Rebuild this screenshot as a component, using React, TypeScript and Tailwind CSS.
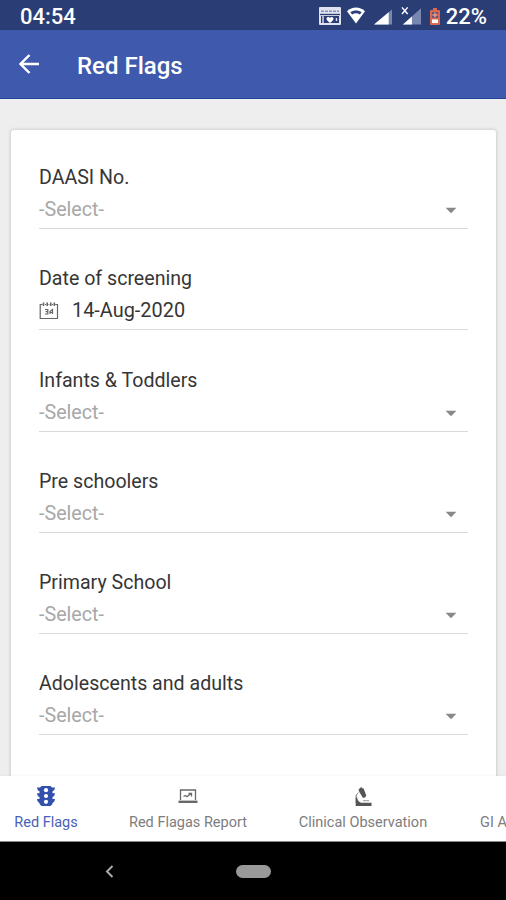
import { MdArrowDropDown } from "react-icons/md";

const fields = [
  { label: "DAASI No." },
  { label: "Date of screening", date: "14-Aug-2020" },
  { label: "Infants & Toddlers" },
  { label: "Pre schoolers" },
  { label: "Primary School" },
  { label: "Adolescents and adults" },
];

const CalendarIcon = () => (
  <svg width="20" height="18" viewBox="0 0 20 18" fill="none" stroke="#666">
    <path d="M3.500 2.500H1.200v14h17.300v-14h-2.300M6 2.500h1M9.500 2.500h1M13 2.500h1" strokeWidth="1.200" />
    <path d="M4.500 0.500v3.500M8.200 0.500v3.500M11.800 0.500v3.500M15.300 0.500v3.500" strokeWidth="1.600" />
    <path d="M6 7.500h2.800v4.500H6M6.600 9.700h2.200M11 12V9.500l2.500-2v4.500M10.600 10.500h3.400" strokeWidth="1.200" />
  </svg>
);

const TrafficIcon = () => (
  <svg width="18" height="20" viewBox="0 0 18 20">
    <path
      fill="#3350ae"
      d="M4.500 0h9l1.500 1.500h3c-.2 2-1 3.200-2.500 3.800v2H18c-.2 2-1 3.200-2.500 3.800v2H18c-.2 2-1 3.200-2.500 3.800V18l-2 2h-9l-2-2v-1.100C1 16.300.2 15.100 0 13.100h2.500v-2C1 10.500.2 9.300 0 7.300h2.500v-2C1 4.700.2 3.500 0 1.500h3z"
    />
    <circle cx="9" cy="4.200" r="2.100" fill="#fff" />
    <circle cx="9" cy="10" r="2.100" fill="#fff" />
    <circle cx="9" cy="15.800" r="2.100" fill="#fff" />
  </svg>
);

const LaptopIcon = () => (
  <svg width="20" height="15" viewBox="0 0 20 15" fill="none" stroke="#686868">
    <path d="M2.500 11V1h15v10" strokeWidth="1.300" />
    <path d="M0.500 12.800h19" strokeWidth="2.400" />
    <path d="M5.500 7.500l2-1 1.500 1.200 3.800-3.200M10.500 4.500h3v3" strokeWidth="1.300" />
  </svg>
);

const MicroscopeIcon = () => (
  <svg width="17" height="19" viewBox="0 0 17 19" fill="#555">
    <path d="M3.500 2.500L6.300 0l1.200 1.500 1-.3 2.800 7.300-1 1.800-2.300.8L4.200 4.800z" />
    <path d="M3.500 5.800L1.200 8v8" fill="none" stroke="#777" />
    <path d="M.7 10.500h1.500c0 2.500 1.500 4.500 4 5.300H16.500V19H.7z" />
    <path d="M8 13.200h6v1H8z" fill="#999" />
  </svg>
);

const tabs = [
  { name: "Red Flags", icon: <TrafficIcon />, width: "w-[92px]", color: "text-[#4a5fb5]" },
  { name: "Red Flagas Report", icon: <LaptopIcon />, width: "w-[192px]", color: "text-[#7d7d7d]" },
  { name: "Clinical Observation", icon: <MicroscopeIcon />, width: "w-[158px]", color: "text-[#7d7d7d]" },
  { name: "GI A", icon: null, width: "w-16 pl-[38px] items-start!", color: "text-[#7d7d7d]" },
];

const StatusBar = () => (
  <div className="flex h-[30px] shrink-0 items-center justify-between bg-[#2b3d75] pl-5 pr-[19px] pt-[4px] text-[22px] font-medium leading-none text-white">
    <span>04:54</span>
    <div className="flex items-center">
      <svg className="mr-[6px] -mt-[3px]" width="22" height="18" viewBox="0 0 22 18">
        <rect width="22" height="18" rx="1" fill="#dfe3ef" />
        <path d="M2 4.300h18" stroke="#8792b8" strokeWidth="1.500" strokeDasharray="3 1" />
        <path d="M1 7.500h20" stroke="#2b3d75" strokeWidth="1.300" />
        <path d="M2 9h18v7H2z" fill="#2b3d75" />
        <path d="M4 9v7M17.500 11v3" stroke="#dfe3ef" strokeWidth="1.400" />
        <path d="M7.500 11.200c1-1.800 2.800-1.500 3.500-.2.700-1.300 2.500-1.600 3.500.2.500 1.700-2 3.500-3.500 4.800-1.500-1.300-4-3.100-3.500-4.800z" fill="#fff" />
      </svg>
      <svg className="mr-[9px] -mt-[3px]" width="18" height="17" viewBox="0 0 19 17">
        <path d="M0 4C5.500-1.300 13.500-1.300 19 4L9.500 17z" fill="#fff" />
        <path d="M3.500 5C7 2.600 12 2.600 15.500 5l-1.900 2.400c-2.400-1.700-5.800-1.700-8.200 0z" fill="#2b3d75" />
      </svg>
      <svg className="mr-[9px]" width="18" height="16" viewBox="0 0 19 16">
        <path d="M19 0v16H0z" fill="#7987b0" />
        <path d="M15.500 3V16H0z" fill="#fff" />
      </svg>
      <svg className="mr-[9px] -mt-[3px]" width="20" height="19" viewBox="0 0 21 19">
        <path d="M21 2v17H2z" fill="#7987b0" />
        <path d="M11.500 10.500V19H2z" fill="#fff" />
        <path d="M1 1l6 7M7 1L1 8" stroke="#fff" strokeWidth="1.500" />
      </svg>
      <svg className="mr-[6px] -mt-[2px]" width="10" height="17" viewBox="0 0 10 17">
        <path d="M3 0h4v2h2q1 0 1 1v13q0 1-1 1H1q-1 0-1-1V3q0-1 1-1h2z" fill="#d9694f" />
        <path d="M2 11.500h6v3.500H2z" fill="#fff" />
        <path d="M2 4h6v6H2z" fill="#6b5675" />
        <path d="M5 4.500v5M2.500 7h5" stroke="#e8a08e" strokeWidth="1.300" />
      </svg>
      <span>22%</span>
    </div>
  </div>
);

const App = () => {
  return (
    <div className="flex h-[900px] w-[506px] flex-col overflow-hidden bg-[#eeeeee] font-['Roboto',sans-serif]">
      <StatusBar />
      <header className="flex h-[69px] shrink-0 items-center border-b border-[#26439c] bg-[#3f5aad] pl-[19px] pt-[2px] text-white">
        <svg className="-mt-[2px]" width="20" height="20" viewBox="0 0 20 20" fill="none" stroke="#fff" strokeWidth="2.400">
          <path d="M20 10H1.500M10.500 1L1.500 10l9 9" />
        </svg>
        <h1 className="ml-[38px] mt-[2px] text-[24px] font-medium leading-none">Red Flags</h1>
      </header>

      <main className="min-h-0 flex-1 overflow-hidden pl-[11px] pr-[10px] pt-[31px]">
        <div className="flex h-[700px] flex-col gap-[37.300px] rounded-[3px] bg-white px-7 pt-[35px] shadow-[0_0_3px_1px_rgba(0,0,0,0.13)]">
          {fields.map((field) => (
            <div key={field.label} className="flex h-16 shrink-0 flex-col border-b-[1.500px] border-[#d9d9d9]">
              <label className="pt-px text-[19.600px] leading-6 text-[#363636]">{field.label}</label>
              {field.date ? (
                <div className="mt-[8px] flex items-center text-[19.900px] leading-6 text-[#363636]">
                  <CalendarIcon />
                  <span className="ml-[13px]">{field.date}</span>
                </div>
              ) : (
                <div className="mt-[8px] flex h-6 items-center justify-between pr-[4px] text-[19.700px] leading-6 text-[#a8a8a8]">
                  <span>-Select-</span>
                  <MdArrowDropDown size={26} color="#888" />
                </div>
              )}
            </div>
          ))}
        </div>
      </main>

      <nav className="z-10 flex h-[66px] shrink-0 overflow-hidden border-b border-[#888] bg-white shadow-[0_-1px_2px_rgba(0,0,0,0.04)]">
        {tabs.map((tab) => (
          <div key={tab.name} className={`flex shrink-0 flex-col items-center pt-[10px] ${tab.width} ${tab.color}`}>
            <div className="flex h-5 items-center">{tab.icon}</div>
            <span className="mt-[8px] whitespace-nowrap text-[14.500px] leading-[18px]">{tab.name}</span>
          </div>
        ))}
      </nav>

      <div className="grid h-[58px] shrink-0 grid-cols-[219px_1fr] items-center bg-black">
        <svg className="justify-self-center" width="9" height="13" viewBox="0 0 9 13" fill="none" stroke="#aaa" strokeWidth="2">
          <path d="M7.500 1L2 6.500 7.500 12" />
        </svg>
        <div className="ml-[17px] h-[13px] w-[35px] rounded-full bg-[#999]" />
      </div>
    </div>
  );
};

export default App;
